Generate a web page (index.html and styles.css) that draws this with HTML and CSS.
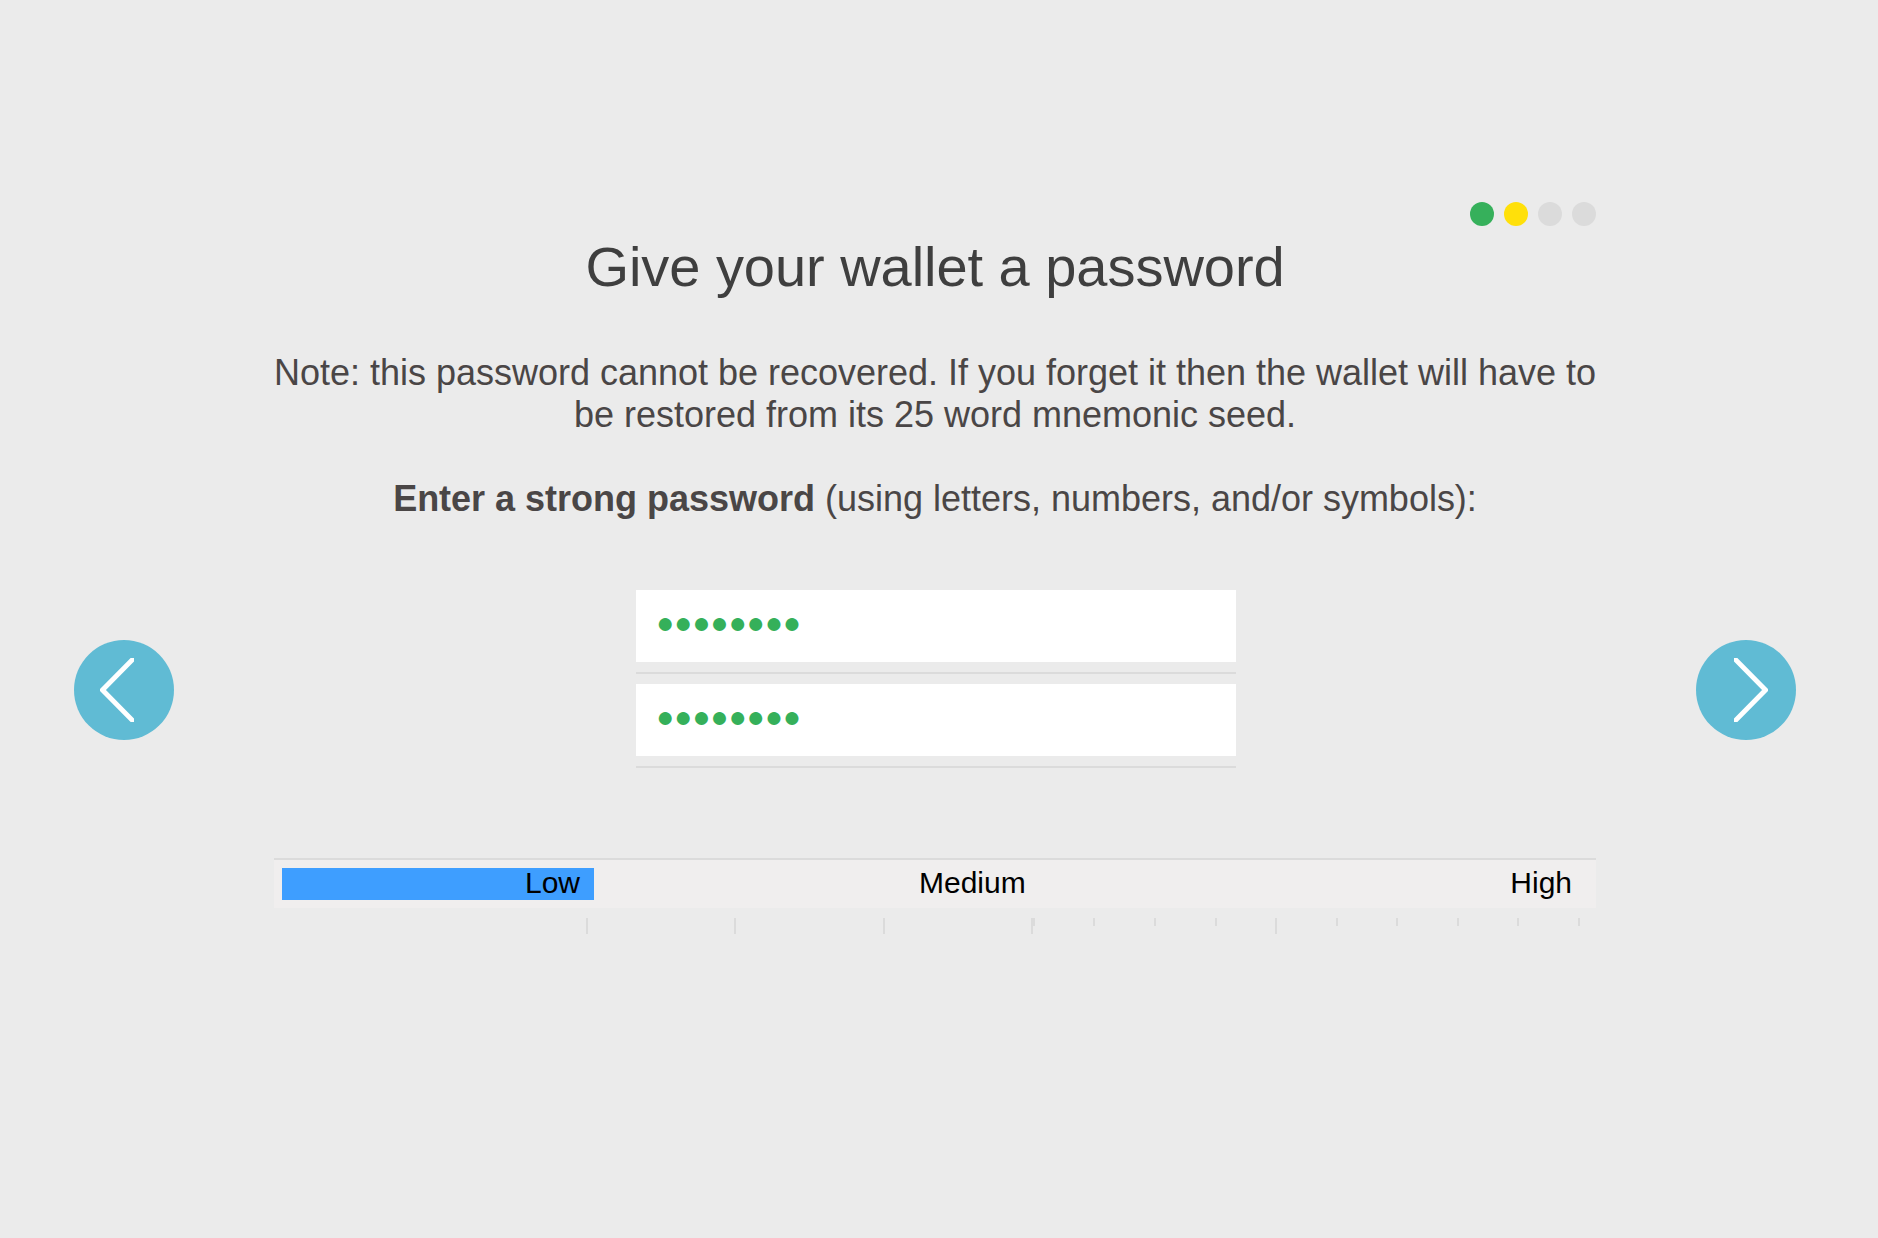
FILE: index.html
```html
<!DOCTYPE html>
<html lang="en">
<head>
<meta charset="utf-8">
<title>Wallet password</title>
<link rel="stylesheet" href="styles.css">
</head>
<body>
<div class="wizard">
  <button class="nav" aria-label="Previous">
    <svg width="34" height="64" viewBox="0 0 34 64"><path d="M35 -1 L2.5 32 L35 65"/></svg>
  </button>
  <main class="page">
    <div class="steps"><i class="done"></i><i class="current"></i><i></i><i></i></div>
    <h1>Give your wallet a password</h1>
    <p>Note: this password cannot be recovered. If you forget it then the wallet will have to<br>be restored from its 25 word mnemonic seed.</p>
    <p><b>Enter a strong password</b> (using letters, numbers, and/or symbols):</p>
    <form class="fields">
      <div class="field"><div class="box">●●●●●●●●</div></div>
      <div class="field"><div class="box">●●●●●●●●</div></div>
    </form>
    <div class="meter">
      <div class="fill">Low</div>
      <span class="medium">Medium</span>
      <span class="high">High</span>
    </div>
    <svg class="scale" width="1322" height="16" viewBox="0 0 1322 16">
      <path d="M313 0V16M461 0V16M610 0V16M758 0V16M760 0V8M820 0V8M881 0V8M942 0V8M1002 0V16M1063 0V8M1123 0V8M1184 0V8M1244 0V8M1305 0V8"/>
    </svg>
  </main>
  <button class="nav next" aria-label="Next">
    <svg width="34" height="64" viewBox="0 0 34 64"><path d="M-1 -1 L31.5 32 L-1 65"/></svg>
  </button>
</div>
</body>
</html>
```
FILE: styles.css
```css
* { box-sizing: border-box; }

body {
  margin: 0;
  background: #ebebeb;
  font-family: "Liberation Sans", Arial, sans-serif;
}

.wizard {
  display: flex;
  align-items: flex-start;
  gap: 100px;
  height: 1238px;
  padding-left: 74px;
}

.nav {
  flex: none;
  display: flex;
  width: 100px;
  height: 100px;
  margin: 640px 0 0;
  padding: 18px 0 0 26px;
  border: 0;
  border-radius: 50%;
  background: #60bbd4;
}

.nav.next { padding-left: 38px; }

.nav path {
  fill: none;
  stroke: #fff;
  stroke-width: 4.8;
}

.page {
  flex: none;
  width: 1322px;
  padding-top: 202px;
}

.steps {
  display: flex;
  justify-content: flex-end;
  gap: 10px;
}

.steps i {
  width: 24px;
  height: 24px;
  border-radius: 50%;
  background: #dbdbdb;
}

.steps .done { background: #36b05b; }
.steps .current { background: #ffe00a; }

h1 {
  margin: 9px 0 53px;
  font-size: 56px;
  font-weight: 400;
  line-height: 64px;
  letter-spacing: -0.04px;
  text-align: center;
  color: #3f3f3f;
}

p {
  margin: 0 0 42px;
  font-size: 36px;
  line-height: 42px;
  letter-spacing: -0.01px;
  text-align: center;
  white-space: nowrap;
  color: #4a4646;
}

.fields {
  width: 600px;
  margin: 70px auto 90px 362px;
  display: flex;
  flex-direction: column;
  gap: 10px;
}

.field {
  padding-bottom: 10px;
  border-bottom: 2px solid #dbdbdb;
}

.box {
  height: 72px;
  padding-left: 20px;
  background: #fff;
  color: #35b05a;
  font-size: 30px;
  line-height: 66px;
}

.meter {
  display: flex;
  align-items: center;
  height: 50px;
  padding: 0 24px 0 8px;
  border-top: 2px solid #dbdbdb;
  background: #f0eeee;
  font-size: 30px;
  line-height: 30px;
  color: #000;
}

.fill {
  width: 312px;
  height: 32px;
  padding-right: 14px;
  background: #3e9eff;
  text-align: right;
}

.medium,
.high { padding-bottom: 2px; }

.medium { margin-left: 325px; }
.high { margin-left: auto; }

.scale {
  display: block;
  margin-top: 10px;
  shape-rendering: crispEdges;
}

.scale path {
  stroke: #dbdbdb;
  stroke-width: 2;
}
```
